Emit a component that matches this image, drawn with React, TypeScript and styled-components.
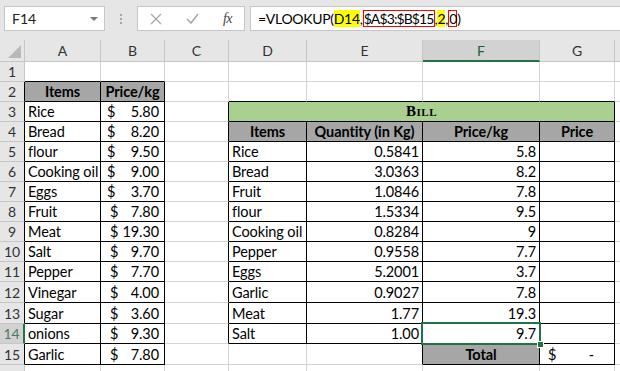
import React from 'react';
import styled, { createGlobalStyle } from 'styled-components';

const GRID = '#d4d4d4';
const LINE = '#000000';
const GREEN = '#217346';
const CHROME = '#e6e6e6';
const HEAD_LINE = '#c6c6c6';

const COLS = [76, 64, 64, 78, 116, 117, 75, 64];
const ROW_HEIGHTS = [20, 20, 20, 20, 20, 20, 20, 20, 20, 20, 20, 21, 21, 20, 21, 20];
const LETTERS = ['A', 'B', 'C', 'D', 'E', 'F', 'G', 'H'];
const LAST_ROW = 15;
const LAST_COL = 6;
const SEL_ROW = 14;
const SEL_COL = 5;

type Kind = 'blank' | 'text' | 'num' | 'money' | 'head' | 'title' | 'total';

interface Item {
  kind: Kind;
  value?: string;
  span?: number;
  indent?: number;
  tail?: number;
}

// boxed ranges: A2:B15, D3:G14, F15:G15
const boxed = (r: number, c: number) =>
  (r >= 2 && r <= 15 && c >= 0 && c <= 1) ||
  (r >= 3 && r <= 14 && c >= 3 && c <= 6) ||
  (r === 15 && (c === 5 || c === 6));

const leftTable: [string, string][] = [
  ['Rice', '5.80'],
  ['Bread', '8.20'],
  ['flour', '9.50'],
  ['Cooking oil', '9.00'],
  ['Eggs', '3.70'],
  ['Fruit', '7.80'],
  ['Meat', '19.30'],
  ['Salt', '9.70'],
  ['Pepper', '7.70'],
  ['Vinegar', '4.00'],
  ['Sugar', '3.60'],
  ['onions', '9.30'],
  ['Garlic', '7.80'],
];

const bill: [string, string, string][] = [
  ['Rice', '0.5841', '5.8'],
  ['Bread', '3.0363', '8.2'],
  ['Fruit', '1.0846', '7.8'],
  ['flour', '1.5334', '9.5'],
  ['Cooking oil', '0.8284', '9'],
  ['Pepper', '0.9558', '7.7'],
  ['Eggs', '5.2001', '3.7'],
  ['Garlic', '0.9027', '7.8'],
  ['Meat', '1.77', '19.3'],
  ['Salt', '1.00', '9.7'],
];

const buildRows = (): Item[][] => {
  const rows: Item[][] = [];
  for (let r = 1; r <= 16; r++) {
    const row: Item[] = LETTERS.map(() => ({ kind: 'blank' as Kind }));
    if (r === 2) {
      row[0] = { kind: 'head', value: 'Items' };
      row[1] = { kind: 'head', value: 'Price/kg' };
    }
    if (r >= 3 && r <= 15) {
      const [name, price] = leftTable[r - 3];
      row[0] = { kind: 'text', value: name };
      row[1] = { kind: 'money', value: price, indent: r <= 7 ? 6 : 9 };
    }
    if (r === 3) {
      row[3] = { kind: 'title', value: 'Bill', span: 4 };
    }
    if (r === 4) {
      row[3] = { kind: 'head', value: 'Items' };
      row[4] = { kind: 'head', value: 'Quantity (in Kg)' };
      row[5] = { kind: 'head', value: 'Price/kg' };
      row[6] = { kind: 'head', value: 'Price' };
    }
    if (r >= 5 && r <= 14) {
      const [name, qty, price] = bill[r - 5];
      row[3] = { kind: 'text', value: name };
      row[4] = { kind: 'num', value: qty };
      row[5] = { kind: 'num', value: price };
    }
    if (r === 15) {
      row[5] = { kind: 'total', value: 'Total' };
      row[6] = { kind: 'money', value: '-', indent: 8, tail: 20 };
    }
    rows.push(row);
  }
  return rows;
};

const GlobalStyle = createGlobalStyle`
  html, body {
    margin: 0;
    padding: 0;
    overflow: hidden;
    background: #ffffff;
  }
  body {
    font-family: Lato, "Open Sans", sans-serif;
    color: #000;
  }
`;

const Window = styled.div`
  width: 620px;
  height: 371px;
  display: flex;
  flex-direction: column;
  overflow: hidden;
`;

const FormulaBar = styled.div`
  height: 40px;
  flex-shrink: 0;
  display: flex;
  align-items: flex-start;
  padding: 6px 0 0 4px;
  box-sizing: border-box;
  background: ${CHROME};
`;

const Field = styled.div`
  height: 25px;
  box-sizing: border-box;
  background: #fff;
  border: 1px solid ${HEAD_LINE};
  display: flex;
  align-items: center;
`;

const NameBox = styled(Field)`
  width: 101px;
  padding: 0 6px 0 7px;
  justify-content: space-between;
  font-size: 14px;
  color: #222;
`;

const DropArrow = styled.span`
  width: 0;
  height: 0;
  border-left: 4px solid transparent;
  border-right: 4px solid transparent;
  border-top: 4px solid #777;
`;

const Grip = styled.div`
  width: 32px;
  height: 25px;
  display: flex;
  flex-direction: column;
  align-items: center;
  justify-content: center;
  gap: 2px;

  span {
    width: 2px;
    height: 2px;
    background: #a6a6a6;
  }
`;

const FxBox = styled(Field)`
  width: 108px;
  padding: 0 12px 0 12px;
  justify-content: space-between;
`;

const FxLabel = styled.span`
  font-family: "Liberation Serif", serif;
  font-style: italic;
  font-size: 14px;
  color: #444;
  letter-spacing: -0.5px;
`;

const FormulaInput = styled(Field)`
  flex: 1;
  margin-left: 5px;
  margin-right: -1px;
  padding-left: 7px;
  font-size: 14px;
  letter-spacing: -0.3px;
  white-space: nowrap;
`;

const Hilite = styled.span`
  display: inline-block;
  line-height: 17px;
  background: #ffff00;
`;

const RefBox = styled.span`
  display: inline-block;
  line-height: 15px;
  letter-spacing: -0.9px;
  border: 1px solid #ff0000;
`;

const Sheet = styled.div`
  flex: 1;
  display: grid;
  grid-template-columns: 25px ${COLS.map((w) => `${w}px`).join(' ')};
  grid-template-rows: 22px ${ROW_HEIGHTS.map((h) => `${h}px`).join(' ')};
  font-size: 14.5px;
  letter-spacing: -0.1px;
  overflow: hidden;
`;

const Corner = styled.div`
  position: relative;
  background: ${CHROME};
  border-right: 1px solid ${HEAD_LINE};
  border-bottom: 1px solid ${HEAD_LINE};

  &::after {
    content: '';
    position: absolute;
    right: 3px;
    bottom: 3px;
    width: 0;
    height: 0;
    border-left: 13px solid transparent;
    border-bottom: 13px solid #b9b9b9;
  }
`;

const ColHead = styled.div<{ $selected?: boolean }>`
  display: flex;
  align-items: center;
  justify-content: center;
  background: ${(p) => (p.$selected ? '#d2d2d2' : CHROME)};
  border-right: 1px solid ${HEAD_LINE};
  border-bottom: ${(p) => (p.$selected ? `2px solid ${GREEN}` : `1px solid ${HEAD_LINE}`)};
  color: ${(p) => (p.$selected ? '#1b5e39' : '#333')};
  font-size: 14px;
`;

const RowHead = styled.div<{ $selected?: boolean; $edge: string }>`
  display: flex;
  align-items: center;
  justify-content: center;
  background: ${(p) => (p.$selected ? '#d2d2d2' : CHROME)};
  border-right: ${(p) => (p.$selected ? `2px solid ${GREEN}` : `1px solid ${p.$edge}`)};
  border-bottom: 1px solid ${HEAD_LINE};
  color: ${(p) => (p.$selected ? '#4d7a5f' : '#333')};
  font-size: 14px;
`;

const Cell = styled.div<{
  $right: string;
  $bottom: string;
  $span: number;
  $kind: Kind;
  $selected?: boolean;
}>`
  position: relative;
  grid-column: span ${(p) => p.$span};
  display: flex;
  align-items: flex-end;
  justify-content: ${(p) =>
    p.$kind === 'num' ? 'flex-end' : p.$kind === 'head' || p.$kind === 'title' || p.$kind === 'total' ? 'center' : 'flex-start'};
  padding: 0 3px 1px 3px;
  line-height: 17px;
  white-space: nowrap;
  border-right: 1px solid ${(p) => p.$right};
  border-bottom: 1px solid ${(p) => p.$bottom};
  background: ${(p) =>
    p.$kind === 'head' || p.$kind === 'total' ? '#a6a6a6' : p.$kind === 'title' ? '#a9d08e' : '#fff'};
  font-weight: ${(p) => (p.$kind === 'head' || p.$kind === 'total' || p.$kind === 'title' ? 700 : 400)};
  ${(p) =>
    p.$kind === 'title' &&
    `
    font-family: "Liberation Serif", serif;
    font-variant: small-caps;
    font-size: 15px;
    letter-spacing: 0.5px;
  `}
  ${(p) =>
    p.$selected &&
    `
    &::after {
      content: '';
      position: absolute;
      left: -2px;
      top: -2px;
      right: -2px;
      bottom: -2px;
      border: 2px solid ${GREEN};
      z-index: 2;
    }
    &::before {
      content: '';
      position: absolute;
      right: -5px;
      bottom: -5px;
      width: 5px;
      height: 5px;
      background: ${GREEN};
      border: 1px solid #fff;
      z-index: 3;
    }
  `}
`;

const Money = styled.span<{ $indent: number; $tail: number }>`
  flex: 1;
  display: flex;
  justify-content: space-between;
  padding: 0 ${(p) => p.$tail - 3}px 0 ${(p) => p.$indent - 3}px;
`;

const CellValue: React.FC<{ item: Item }> = ({ item }) => {
  if (item.kind === 'money') {
    return (
      <Money $indent={item.indent ?? 7} $tail={item.tail ?? 5}>
        <span>$</span>
        <span>{item.value}</span>
      </Money>
    );
  }
  return <span>{item.value}</span>;
};

const XIcon = () => (
  <svg width="12" height="12" viewBox="0 0 12 12">
    <path d="M1 1 L11 11 M11 1 L1 11" stroke="#a8a8a8" strokeWidth="1.3" fill="none" />
  </svg>
);

const CheckIcon = () => (
  <svg width="13" height="11" viewBox="0 0 13 11">
    <path d="M1 6 L5 10 L12 1" stroke="#a8a8a8" strokeWidth="1.6" fill="none" />
  </svg>
);

const App: React.FC = () => {
  const rows = buildRows();

  return (
    <Window>
      <GlobalStyle />
      <FormulaBar>
        <NameBox>
          <span>F14</span>
          <DropArrow />
        </NameBox>
        <Grip>
          <span />
          <span />
          <span />
        </Grip>
        <FxBox>
          <XIcon />
          <CheckIcon />
          <FxLabel>fx</FxLabel>
        </FxBox>
        <FormulaInput>
          =VLOOKUP(<Hilite>D14</Hilite>,<RefBox>$A$3:$B$15</RefBox>,<Hilite>2</Hilite>,<RefBox>0</RefBox>)
        </FormulaInput>
      </FormulaBar>
      <Sheet>
        <Corner />
        {LETTERS.map((l, i) => (
          <ColHead key={l} $selected={i === SEL_COL}>
            {i <= LAST_COL ? l : ''}
          </ColHead>
        ))}
        {rows.map((row, ri) => {
          const r = ri + 1;
          const cells: React.ReactNode[] = [];
          let c = 0;
          while (c < row.length) {
            const item = row[c];
            const span = item.span ?? 1;
            const last = c + span - 1;
            const right = boxed(r, last) || boxed(r, last + 1) ? LINE : GRID;
            const bottom = boxed(r, c) || boxed(r + 1, c) ? LINE : GRID;
            cells.push(
              <Cell
                key={c}
                $span={span}
                $kind={item.kind}
                $right={right}
                $bottom={bottom}
                $selected={r === SEL_ROW && c === SEL_COL}
              >
                <CellValue item={item} />
              </Cell>,
            );
            c += span;
          }
          return (
            <React.Fragment key={r}>
              <RowHead $selected={r === SEL_ROW} $edge={boxed(r, 0) ? LINE : HEAD_LINE}>
                {r <= LAST_ROW ? r : ''}
              </RowHead>
              {cells}
            </React.Fragment>
          );
        })}
      </Sheet>
    </Window>
  );
};

export default App;
